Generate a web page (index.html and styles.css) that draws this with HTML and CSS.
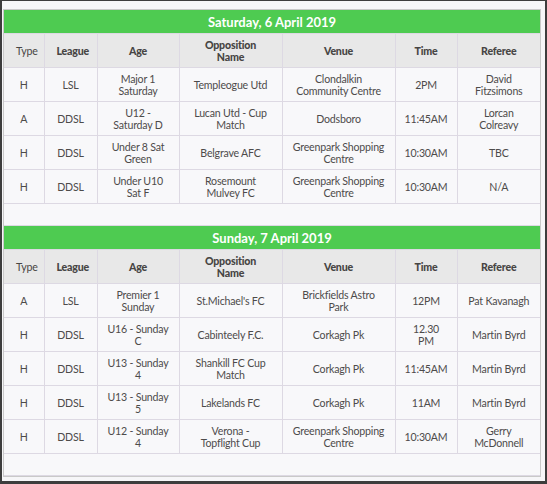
FILE: index.html
```html
<!DOCTYPE html>
<html>
<head>
<meta charset="utf-8">
<link rel="stylesheet" href="styles.css">
</head>
<body>
<div class="frame">
  <div class="panel">
    <table class="fixtures">
      <colgroup>
        <col class="c-type"><col class="c-league"><col class="c-age"><col class="c-opp"><col class="c-venue"><col class="c-time"><col class="c-ref">
      </colgroup>
      <tbody>
        <tr class="day"><td colspan="7">Saturday, 6 April 2019</td></tr>
        <tr class="head"><th class="light">Type</th><th>League</th><th>Age</th><th>Opposition Name</th><th>Venue</th><th>Time</th><th>Referee</th></tr>
        <tr><td>H</td><td>LSL</td><td>Major 1 Saturday</td><td>Templeogue Utd</td><td>Clondalkin Community Centre</td><td>2PM</td><td>David Fitzsimons</td></tr>
        <tr><td>A</td><td>DDSL</td><td>U12 - Saturday D</td><td>Lucan Utd - Cup Match</td><td>Dodsboro</td><td>11:45AM</td><td>Lorcan Colreavy</td></tr>
        <tr><td>H</td><td>DDSL</td><td>Under 8 Sat Green</td><td>Belgrave AFC</td><td>Greenpark Shopping Centre</td><td>10:30AM</td><td>TBC</td></tr>
        <tr><td>H</td><td>DDSL</td><td>Under U10 Sat F</td><td>Rosemount Mulvey FC</td><td>Greenpark Shopping Centre</td><td>10:30AM</td><td>N/A</td></tr>
        <tr class="gap"><td colspan="7"></td></tr>
        <tr class="day"><td colspan="7">Sunday, 7 April 2019</td></tr>
        <tr class="head"><th class="light">Type</th><th>League</th><th>Age</th><th>Opposition Name</th><th>Venue</th><th>Time</th><th>Referee</th></tr>
        <tr><td>A</td><td>LSL</td><td>Premier 1 Sunday</td><td>St.Michael's FC</td><td>Brickfields Astro Park</td><td>12PM</td><td>Pat Kavanagh</td></tr>
        <tr><td>H</td><td>DDSL</td><td>U16 - Sunday C</td><td>Cabinteely F.C.</td><td>Corkagh Pk</td><td>12.30 PM</td><td>Martin Byrd</td></tr>
        <tr><td>H</td><td>DDSL</td><td>U13 - Sunday 4</td><td>Shankill FC Cup Match</td><td>Corkagh Pk</td><td>11:45AM</td><td>Martin Byrd</td></tr>
        <tr><td>H</td><td>DDSL</td><td>U13 - Sunday 5</td><td>Lakelands FC</td><td>Corkagh Pk</td><td>11AM</td><td>Martin Byrd</td></tr>
        <tr><td>H</td><td>DDSL</td><td>U12 - Sunday 4</td><td>Verona - Topflight&nbsp;Cup</td><td>Greenpark Shopping Centre</td><td>10:30AM</td><td>Gerry McDonnell</td></tr>
        <tr class="gap"><td colspan="7"></td></tr>
      </tbody>
    </table>
  </div>
</div>
</body>
</html>
```

FILE: styles.css
```css
html, body {
  margin: 0;
  padding: 0;
}
body {
  width: 547px;
  height: 484px;
  overflow: hidden;
  font-family: "Lato", "Open Sans", sans-serif;
}
.frame {
  box-sizing: border-box;
  width: 547px;
  height: 484px;
  background: #f6f6f8;
  border-left: 2px solid #3d3d3d;
  border-right: 2px solid #3d3d3d;
  border-top: 1px solid #3d3d3d;
  border-bottom: 3px solid #3d3d3d;
  padding: 8px 3px 0 1px;
}
.panel {
  border: 1px solid #c9c9c9;
  background: #f8f8fa;
  width: 536px;
}
.fixtures {
  width: 536px;
  table-layout: fixed;
  border-collapse: collapse;
  font-size: 10.6px;
  letter-spacing: -0.2px;
  color: #4d4b4a;
  line-height: 12px;
}
.c-type { width: 40px; }
.c-league { width: 53px; }
.c-age { width: 82px; }
.c-opp { width: 103px; }
.c-venue { width: 113px; }
.c-time { width: 62px; }
.c-ref { width: 83px; }
.fixtures td, .fixtures th {
  border: 1px solid #ddd9e3;
  text-align: center;
  vertical-align: middle;
  padding: 0 9px;
  height: 33px;
  background: #f8f8fa;
}
.fixtures tr:first-child td { border-top: none; }
.fixtures td:first-child, .fixtures th:first-child { border-left: none; }
.fixtures td:last-child, .fixtures th:last-child { border-right: none; }
.fixtures .day td {
  background: #4ecb51;
  color: #ffffff;
  font-size: 13px;
  letter-spacing: 0;
  font-weight: 700;
  height: 23px;
  padding: 0;
  border-left: none;
  border-right: none;
}
.fixtures .head th {
  background: #e8e8e8;
  font-weight: 900;
  color: #474544;
  padding: 0 12px;
}
.fixtures .head th.light {
  font-weight: 400;
}
.fixtures .gap td {
  height: 21px;
}
```
